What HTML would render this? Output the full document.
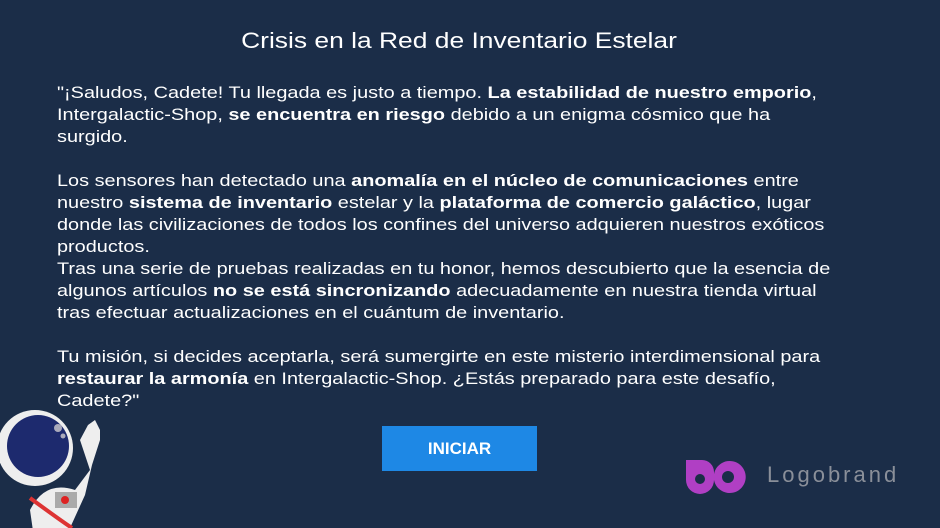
<!DOCTYPE html>
<html><head><meta charset="utf-8"><style>
html,body{margin:0;width:940px;height:528px;overflow:hidden}
body{background:#1b2d48;position:relative;font-family:"Liberation Sans",sans-serif;color:#fff}
h1{position:absolute;top:28px;left:0;width:918px;text-align:center;margin:0;font-weight:normal;font-size:22px;transform:scaleX(1.2);transform-origin:459px 0}
.p{position:absolute;left:57px;top:82px;font-size:17px;line-height:22px;white-space:nowrap;transform:scaleX(1.17);transform-origin:0 0}
.btn{position:absolute;left:382px;top:426px;width:155px;height:45px;background:#1e88e5;color:#fff;font-weight:bold;font-size:17px;text-align:center;line-height:45px}
.lt{position:absolute;left:767px;top:462px;font-size:22px;color:#8a8f99;letter-spacing:3px}
</style></head><body>
<h1>Crisis en la Red de Inventario Estelar</h1>
<div class="p">"¡Saludos, Cadete! Tu llegada es justo a tiempo. <b>La estabilidad de nuestro emporio</b>,<br>
Intergalactic-Shop, <b>se encuentra en riesgo</b> debido a un enigma cósmico que ha<br>
surgido.<br><br>
Los sensores han detectado una <b>anomalía en el núcleo de comunicaciones</b> entre<br>
nuestro <b>sistema de inventario</b> estelar y la <b>plataforma de comercio galáctico</b>, lugar<br>
donde las civilizaciones de todos los confines del universo adquieren nuestros exóticos<br>
productos.<br>
Tras una serie de pruebas realizadas en tu honor, hemos descubierto que la esencia de<br>
algunos artículos <b>no se está sincronizando</b> adecuadamente en nuestra tienda virtual<br>
tras efectuar actualizaciones en el cuántum de inventario.<br><br>
Tu misión, si decides aceptarla, será sumergirte en este misterio interdimensional para<br>
<b>restaurar la armonía</b> en Intergalactic-Shop. ¿Estás preparado para este desafío,<br>
Cadete?"</div>
<div class="btn">INICIAR</div>
<svg style="position:absolute;left:0;top:380px" width="120" height="148">
<path d="M40 200 L30 130 Q45 100 75 110 L90 90 L80 60 L88 45 L95 40 L100 50 L100 60 L92 85 L85 115 L70 148 Z" fill="#eee"/>
<path d="M30 118 Q60 140 72 148" stroke="#d33" stroke-width="4" fill="none"/>
<rect x="55" y="112" width="22" height="16" fill="#aaa"/><circle cx="65" cy="120" r="4" fill="#d22"/>
<circle cx="35" cy="68" r="38" fill="#eee"/>
<circle cx="38" cy="66" r="31" fill="#1d2a6e"/>
<circle cx="58" cy="48" r="4" fill="#aab"/><circle cx="63" cy="56" r="2.5" fill="#aab"/>
</svg>
<svg style="position:absolute;left:684px;top:458px" width="62" height="38" viewBox="0 0 62 38">
<path d="M2 2 L2 22 A14 14 0 0 0 30 22 A16 16 0 1 0 30 16 L30 14 A12 12 0 0 0 18 2 Z" fill="#b03fc4"/>
<circle cx="16" cy="21" r="5" fill="#1b2d48"/>
<circle cx="44" cy="19" r="6" fill="#1b2d48"/>
</svg>
<div class="lt">Logobrand</div>
</body></html>
